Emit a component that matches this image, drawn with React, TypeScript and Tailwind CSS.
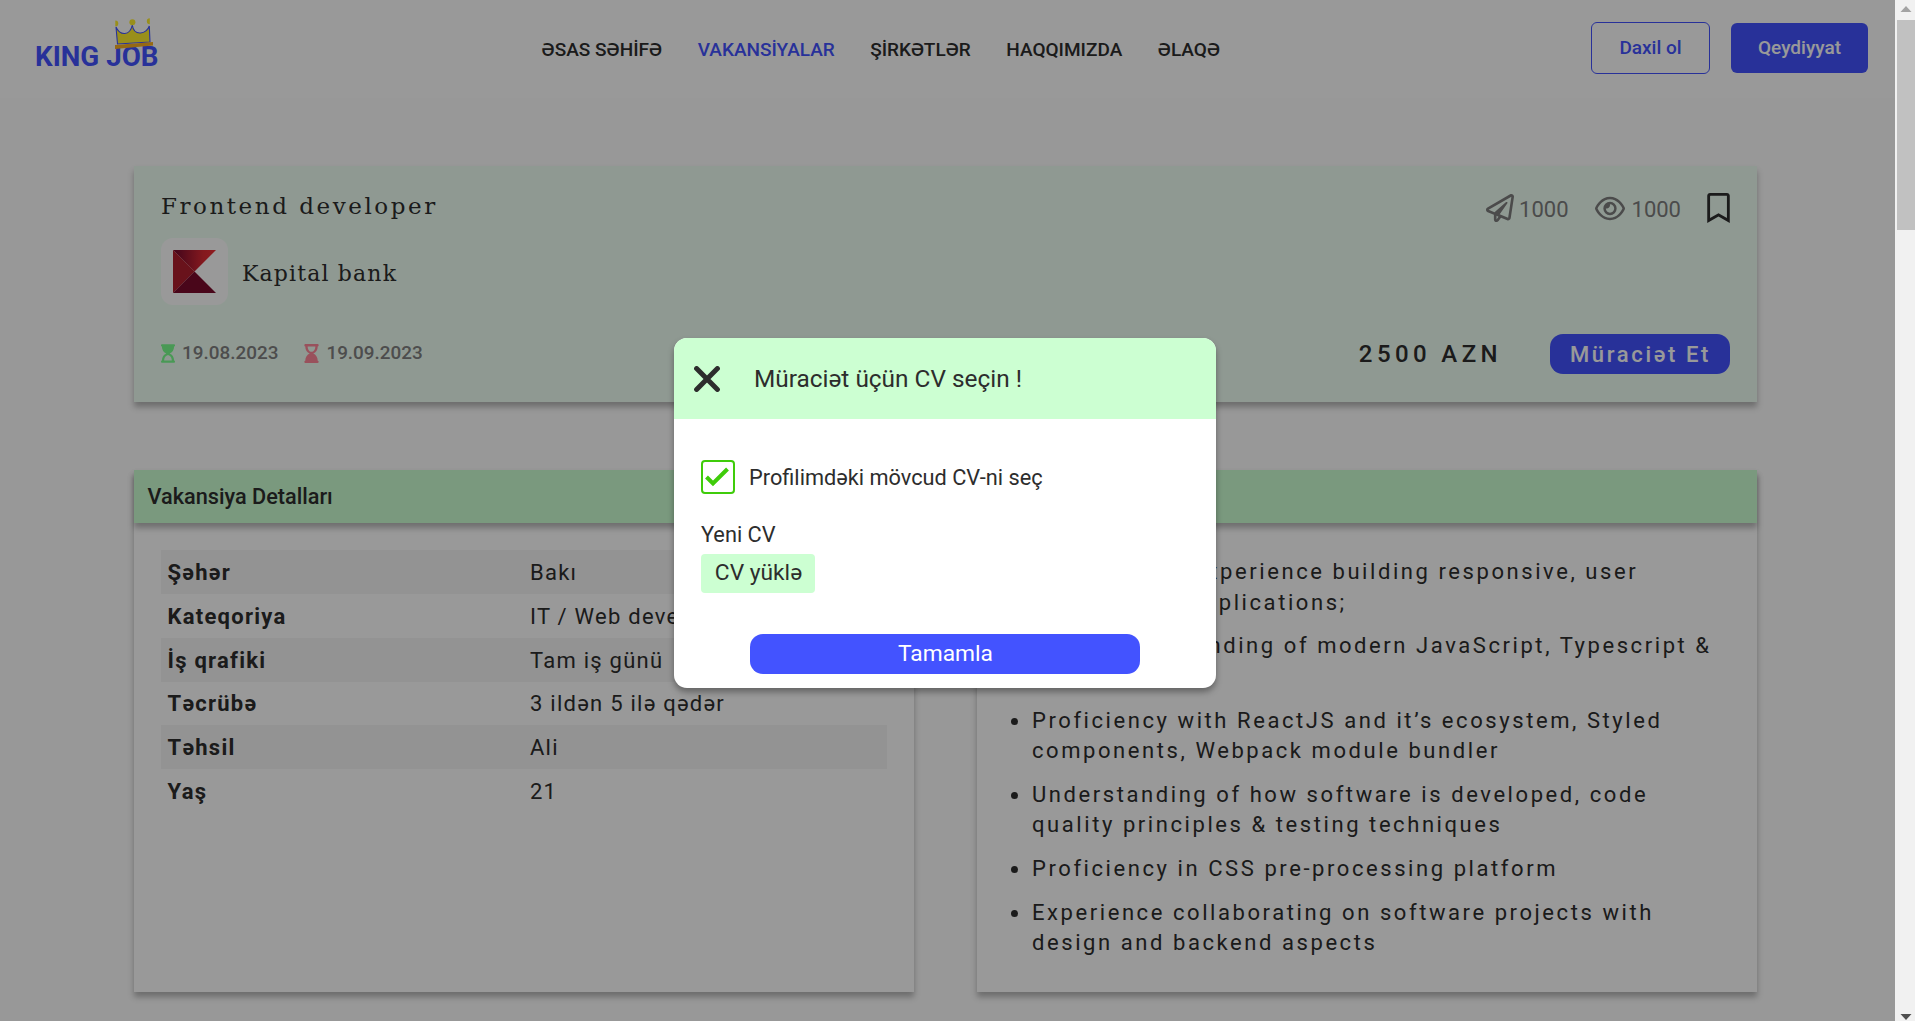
import type { ReactNode } from "react";
import { FaHourglassEnd, FaHourglassStart, FaRegBookmark, FaRegPaperPlane } from "react-icons/fa";
import { FaRegEye } from "react-icons/fa6";

const navItems = ["ƏSAS SƏHİFƏ", "VAKANSİYALAR", "ŞİRKƏTLƏR", "HAQQIMIZDA", "ƏLAQƏ"];

const details = [
  ["Şəhər", "Bakı"],
  ["Kateqoriya", "IT / Web development"],
  ["İş qrafiki", "Tam iş günü"],
  ["Təcrübə", "3 ildən 5 ilə qədər"],
  ["Təhsil", "Ali"],
  ["Yaş", "21"],
];

const requirements: ReactNode[][] = [
  [
    <>
      <span className="inline-block w-[300.5px] text-right whitespace-pre">3+ years of experience </span>
      building responsive, user
    </>,
    "friendly web applications;",
  ],
  ["Solid understanding of modern JavaScript, Typescript &", "HTML/CSS"],
  ["Proficiency with ReactJS and it’s ecosystem, Styled", "components, Webpack module bundler"],
  ["Understanding of how software is developed, code", "quality principles & testing techniques"],
  ["Proficiency in CSS pre-processing platform"],
  ["Experience collaborating on software projects with", "design and backend aspects"],
];

const cardShadow = "shadow-[0_5px_6px_rgba(0,0,0,0.28)]";

function Crown() {
  return (
    <svg className="absolute left-[78.5px] top-[1px]" width="40" height="34" viewBox="0 0 40 34">
      <path
        d="M2 10 L3.5 27 L36 25 L35.3 9 C33 17 20 20 18.3 8 C16 19 6 19 2 10Z"
        fill="#ffee2d"
        stroke="#4353ff"
        strokeWidth="1.1"
      />
      <path d="M1 28 L39 25 V28.5 L1 32Z" fill="#fab021" />
      <circle cx="18.4" cy="5.2" r="3" fill="#ffee2d" />
      <path d="M1.3 3.4 A3 3 0 0 1 1.3 9.4Z M35.8 1.2 A3 3 0 0 0 35.8 7.2Z" fill="#ffee2d" />
    </svg>
  );
}

function Header() {
  return (
    <header className="flex h-[98px] items-center bg-white pr-[27px] pl-[35px]">
      <div className="relative h-[66px] w-[506px]">
        <div className="pt-6 text-[27.75px] leading-[33px] font-bold text-[#4353ff]">KING JOB</div>
        <Crown />
      </div>
      <nav className="flex gap-[35.5px] pt-[2px] pl-[0.5px] text-[19px] font-medium whitespace-nowrap">
        {navItems.map((item, i) => (
          <span key={item} className={i === 1 ? "text-[#4353ff]" : ""}>
            {item}
          </span>
        ))}
      </nav>
      <div className="ml-auto flex items-center gap-[21px] text-[19px] font-medium">
        <button className="mb-[2px] h-[52px] w-[119px] rounded-md border border-[#4353ff] text-[#4353ff]">
          Daxil ol
        </button>
        <button className="mb-[2px] h-[50px] w-[137px] rounded-md bg-[#4353ff] text-white">Qeydiyyat</button>
      </div>
    </header>
  );
}

function BankLogo() {
  return (
    <div className="flex size-[67px] items-center justify-center rounded-xl bg-white">
      <svg width="43" height="43" viewBox="0 0 43 43">
        <defs>
          <linearGradient id="top">
            <stop offset="0.1" stopColor="#7b0d2e" />
            <stop offset="0.7" stopColor="#dc2a33" />
            <stop offset="1" stopColor="#ee2f35" />
          </linearGradient>
        </defs>
        <path d="M0 0 H43 L21.5 21.5Z" fill="url(#top)" />
        <path d="M0 0 L21.5 21.5 L0 43Z" fill="#b01e2d" />
        <path d="M0 43 L21.5 21.5 L43 43Z" fill="#7b0b2c" />
      </svg>
    </div>
  );
}

function VacancyCard() {
  return (
    <section className={`flex h-[236px] justify-between bg-[#effff4] px-[27px] ${cardShadow}`}>
      <div className="flex flex-col pt-[23px]">
        <h1 className="h-[33px] font-['DejaVu_Serif',serif] text-[23px] leading-[34px] tracking-[2.55px]">
          Frontend developer
        </h1>
        <div className="mt-4 flex items-center gap-[14px]">
          <BankLogo />
          <span className="pt-[3px] font-['DejaVu_Serif',serif] text-[22px] tracking-[1.15px]">Kapital bank</span>
        </div>
        <div className="mt-[38px] flex h-5 items-center text-[18.9px] font-medium text-[#808080]">
          <FaHourglassStart className="mr-[7px] h-[19px] w-[14px] text-[#7bff8e]" />
          <span className="pt-px">19.08.2023</span>
          <FaHourglassEnd className="mr-[7px] ml-[26px] h-[19px] w-[15px] text-[#ff8899]" />
          <span className="pt-px">19.09.2023</span>
        </div>
      </div>
      <div className="flex flex-col items-end justify-between pt-[27px] pb-7">
        <div className="flex h-[30px] items-center text-[22px] text-[#7d7d7d]">
          <FaRegPaperPlane className="mr-[5px] size-[28px]" />
          <span className="pt-[2px]">1000</span>
          <FaRegEye className="mr-[7px] ml-[26px] h-[27px] w-[30px]" />
          <span className="pt-[2px]">1000</span>
          <FaRegBookmark className="ml-[26px] h-[30px] w-[23px] text-[#2d2d2d]" />
        </div>
        <div className="flex items-center">
          <span className="mr-12 text-[24px] font-medium tracking-[4.4px]">2500 AZN</span>
          <button className="h-10 w-[180px] rounded-[13px] bg-[#4353ff] pl-px text-[22px] font-medium tracking-[2.65px] text-white">
            Müraciət Et
          </button>
        </div>
      </div>
    </section>
  );
}

function Panel({ title, children }: { title?: string; children: ReactNode }) {
  return (
    <section className={`flex h-[522px] flex-1 flex-col bg-white ${cardShadow}`}>
      <h2
        className={`flex h-[53px] items-center bg-[#ccffd2] pt-[2px] pl-[13.5px] text-[21.7px] font-medium ${cardShadow}`}
      >
        {title}
      </h2>
      {children}
    </section>
  );
}

function Modal() {
  return (
    <div className="absolute top-[338px] left-[674px] flex h-[350px] w-[542px] flex-col overflow-hidden rounded-[13px] bg-white text-[21.75px] shadow-[0_4px_6px_rgba(0,0,0,0.35)]">
      <div className="flex h-[81px] items-center bg-[#ccffd2] pl-5 text-[24.4px]">
        <svg width="26" height="26" viewBox="0 0 26 26" className="mr-[34px]">
          <path d="M2.6 2.6 L23.4 23.4 M23.4 2.6 L2.6 23.4" stroke="#2d2d2d" strokeWidth="5" strokeLinecap="round" />
        </svg>
        <span className="pt-[2px]">Müraciət üçün CV seçin !</span>
      </div>
      <div className="flex flex-1 flex-col px-[27px] pt-[41px]">
        <label className="flex h-[34px] items-center gap-[14px]">
          <span className="flex size-[34px] items-center justify-center rounded border-2 border-[#3fcc0a]">
            <svg width="30" height="30" viewBox="0 0 30 30">
              <path d="M3.5 15 L10 21.5 L24.5 7" stroke="#3fcc0a" strokeWidth="4" fill="none" />
            </svg>
          </span>
          <span className="pt-[2px]">Profilimdəki mövcud CV-ni seç</span>
        </label>
        <div className="mt-[25px] leading-8">Yeni CV</div>
        <button className="mt-[3px] h-[39px] w-[114px] rounded bg-[#ccffd2] pb-[2px] pl-px text-[22.75px] leading-[35px]">
          CV yüklə
        </button>
        <button className="mt-[41px] h-10 w-[390px] self-center rounded-[13px] bg-[#4353ff] pt-px pl-px text-[22.75px] text-white">
          Tamamla
        </button>
      </div>
    </div>
  );
}

function Scrollbar() {
  return (
    <div className="flex h-full w-5 flex-col items-center bg-[#f1f1f1]">
      <svg width="20" height="20" viewBox="0 0 20 20">
        <path d="M5.5 12 L11 6 L16.5 12Z" fill="#a3a3a3" />
      </svg>
      <div className="ml-[2px] h-[210px] w-[18px] bg-[#c1c1c1]" />
      <svg width="20" height="20" viewBox="0 0 20 20" className="mt-auto">
        <path d="M5.5 13 L11 19 L16.5 13Z" fill="#505050" />
      </svg>
    </div>
  );
}

export default function App() {
  return (
    <div className="flex h-[1021px] w-full overflow-hidden font-[Roboto,sans-serif] text-[#2d2d2d]">
      <div className="relative h-full flex-1 bg-[#fdfdfd]">
        <Header />
        <main className="flex flex-col gap-[68px] pt-[68px] pr-[138px] pl-[134px]">
          <VacancyCard />
          <div className="flex gap-[63px]">
            <Panel title="Vakansiya Detalları">
              <div className="flex flex-col px-[27px] pt-[27px] text-[22px]">
                {details.map(([label, value]) => (
                  <div key={label} className="flex h-[43.85px] items-center pt-px pl-[6.5px] odd:bg-[#f5f5f5]">
                    <span className="w-[362.5px] font-bold tracking-[1.25px]">{label}</span>
                    <span className="tracking-[1.25px]">{value}</span>
                  </div>
                ))}
              </div>
            </Panel>
            <Panel>
              <ul className="flex flex-col gap-[13.2px] pt-[34.3px] pl-[34px] text-[22px] leading-[30.5px] tracking-[2.57px] whitespace-nowrap">
                {requirements.map((lines, i) => (
                  <li key={i} className="flex gap-[14px]">
                    <span className="mt-3 size-[7px] rounded-full bg-[#2d2d2d]" />
                    <div>
                      {lines.map((line, j) => (
                        <div key={j}>{line}</div>
                      ))}
                    </div>
                  </li>
                ))}
              </ul>
            </Panel>
          </div>
        </main>
        <div className="absolute inset-0 bg-black/40" />
        <Modal />
      </div>
      <Scrollbar />
    </div>
  );
}
